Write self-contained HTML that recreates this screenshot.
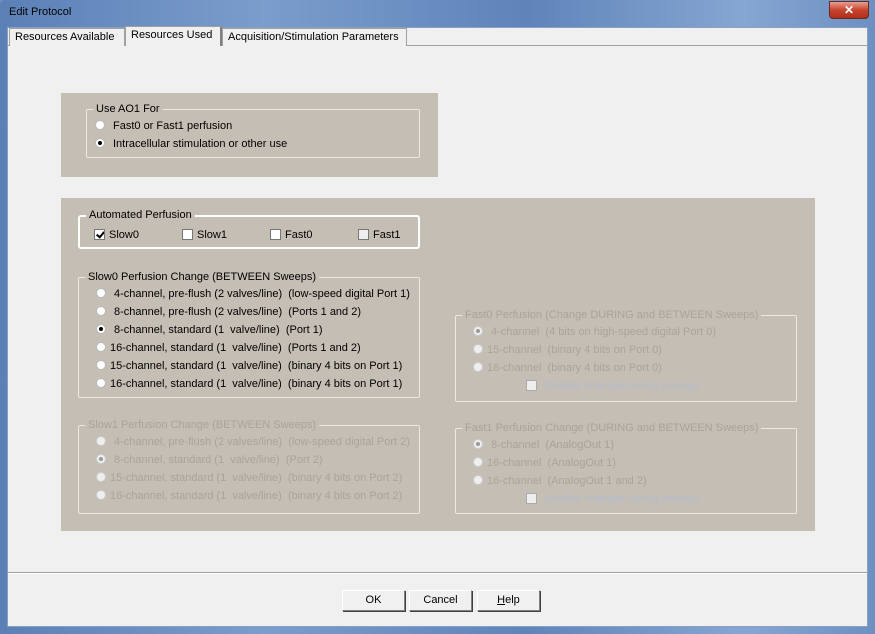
<!DOCTYPE html>
<html><head><style>
*{margin:0;padding:0;box-sizing:border-box}
body{width:875px;height:634px;overflow:hidden;background:#6d8fbf;font-family:"Liberation Sans",sans-serif;font-size:11px;color:#000;position:relative}
.a{position:absolute}
.frame{left:0;top:0;width:875px;height:634px;background:linear-gradient(90deg,#5b80b6,#7a9dcc 30%,#5f84ba 60%,#86a6d2 85%,#6d90c2);border-radius:6px 6px 0 0}
.client{left:7px;top:27px;width:861px;height:600px;background:#f0f0f0;border:1px solid #8aa0bf}
.title{left:9px;top:6px;font-size:11px;color:#000}
.close{left:829px;top:1px;width:40px;height:18px;background:linear-gradient(#e8a090,#c7432e 50%,#b0301c);border:1px solid #6a2a20;border-radius:0 0 4px 4px;color:#fff;font-weight:bold;text-align:center;line-height:16px;font-size:12px}
.tab{top:28px;height:18px;border:1px solid #a0a0a0;border-bottom:none;background:#f0f0f0;padding:2px 5px 0;white-space:nowrap}
.panel{left:8px;top:45px;width:859px;height:527px;border-top:1px solid #a0a0a0;background:#f0f0f0}
.bg{background:#c5beb4}
.g{position:absolute;border:1px solid #ece8e2;border-radius:2px}
.gl{position:absolute;top:-7px;left:6px;background:#c5beb4;padding:0 3px;white-space:nowrap}
.row{position:absolute;white-space:nowrap}
.r{display:inline-block;width:10px;height:10px;border-radius:50%;background:#fff;border:1px solid #b8b8b8;vertical-align:-1px;margin-right:8px;position:relative}
.r.on::after{content:"";position:absolute;left:2px;top:2px;width:4px;height:4px;border-radius:50%;background:#000}
.d{color:#a9a39b}
.d .r{background:#eee;border-color:#ccc}
.d .r.on::after{background:#999}
.c{display:inline-block;width:11px;height:11px;background:#fff;border:1px solid #777;vertical-align:-2px;margin-right:4px;position:relative;overflow:hidden}
.c.on::after{content:"";position:absolute;left:3px;top:0px;width:3px;height:6px;border:solid #000;border-width:0 2px 2px 0;transform:rotate(40deg)}
.btn{top:590px;width:63px;height:21px;background:#f0f0f0;border:1px solid #808080;border-top-color:#fff;border-left-color:#fff;box-shadow:1px 1px 0 #404040;text-align:center;line-height:19px}
</style></head><body>
<div class="a frame"></div>
<div class="a title">Edit Protocol</div>
<div class="a close">✕</div>
<div class="a client"></div>
<div class="a panel"></div>
<div class="a tab" style="left:9px;width:116px">Resources Available</div>
<div class="a tab" style="left:125px;width:97px;top:26px;height:20px;background:#f0f0f0;border-right:2px solid #808080">Resources Used</div>
<div class="a tab" style="left:222px;width:185px">Acquisition/Stimulation Parameters</div>
<div class="a" style="left:8px;top:572px;width:859px;border-top:1px solid #a0a0a0;border-bottom:1px solid #fff"></div>

<div class="a bg" style="left:61px;top:93px;width:377px;height:84px">
 <div class="g" style="left:25px;top:16px;width:334px;height:49px"><span class="gl">Use AO1 For</span>
  <div class="row" style="left:8px;top:10px"><span class="r"></span>Fast0 or Fast1 perfusion</div>
  <div class="row" style="left:8px;top:28px"><span class="r on"></span>Intracellular stimulation or other use</div>
 </div>
</div>

<div class="a bg" style="left:61px;top:198px;width:754px;height:333px">
 <div class="g" style="left:17px;top:17px;width:342px;height:34px;border-color:#fff;border-width:2px;border-radius:3px"><span class="gl" style="top:-8px">Automated Perfusion</span>
  <div class="row" style="left:14px;top:12px"><span class="c on"></span>Slow0</div>
  <div class="row" style="left:102px;top:12px"><span class="c"></span>Slow1</div>
  <div class="row" style="left:190px;top:12px"><span class="c"></span>Fast0</div>
  <div class="row" style="left:278px;top:12px"><span class="c" style="background:#eee"></span>Fast1</div>
 </div>
 <div class="g" style="left:17px;top:79px;width:342px;height:121px"><span class="gl">Slow0 Perfusion Change (BETWEEN Sweeps)</span>
  <div class="row" style="left:17px;top:10px"><span class="r"></span>4-channel, pre-flush (2 valves/line)&nbsp; (low-speed digital Port 1)</div>
  <div class="row" style="left:17px;top:28px"><span class="r"></span>8-channel, pre-flush (2 valves/line)&nbsp; (Ports 1 and 2)</div>
  <div class="row" style="left:17px;top:46px"><span class="r on"></span>8-channel, standard (1&nbsp; valve/line)&nbsp; (Port 1)</div>
  <div class="row" style="left:17px;top:64px"><span class="r" style="margin-right:4px"></span>16-channel, standard (1&nbsp; valve/line)&nbsp; (Ports 1 and 2)</div>
  <div class="row" style="left:17px;top:82px"><span class="r" style="margin-right:4px"></span>15-channel, standard (1&nbsp; valve/line)&nbsp; (binary 4 bits on Port 1)</div>
  <div class="row" style="left:17px;top:100px"><span class="r" style="margin-right:4px"></span>16-channel, standard (1&nbsp; valve/line)&nbsp; (binary 4 bits on Port 1)</div>
 </div>
 <div class="g d" style="left:17px;top:227px;width:342px;height:89px"><span class="gl">Slow1 Perfusion Change (BETWEEN Sweeps)</span>
  <div class="row" style="left:17px;top:10px"><span class="r"></span>4-channel, pre-flush (2 valves/line)&nbsp; (low-speed digital Port 2)</div>
  <div class="row" style="left:17px;top:28px"><span class="r on"></span>8-channel, standard (1&nbsp; valve/line)&nbsp; (Port 2)</div>
  <div class="row" style="left:17px;top:46px"><span class="r" style="margin-right:4px"></span>15-channel, standard (1&nbsp; valve/line)&nbsp; (binary 4 bits on Port 2)</div>
  <div class="row" style="left:17px;top:64px"><span class="r" style="margin-right:4px"></span>16-channel, standard (1&nbsp; valve/line)&nbsp; (binary 4 bits on Port 2)</div>
 </div>
 <div class="g d" style="left:394px;top:117px;width:342px;height:87px"><span class="gl">Fast0 Perfusion (Change DURING and BETWEEN Sweeps)</span>
  <div class="row" style="left:17px;top:10px"><span class="r on"></span>4-channel&nbsp; (4 bits on high-speed digital Port 0)</div>
  <div class="row" style="left:17px;top:28px"><span class="r" style="margin-right:4px"></span>15-channel&nbsp; (binary 4 bits on Port 0)</div>
  <div class="row" style="left:17px;top:46px"><span class="r" style="margin-right:4px"></span>16-channel&nbsp; (binary 4 bits on Port 0)</div>
  <div class="row" style="left:70px;top:64px;color:#b4bccb"><span class="c" style="background:#eee;border-color:#aaa"></span>&nbsp;Disable changes during sweeps</div>
 </div>
 <div class="g d" style="left:394px;top:230px;width:342px;height:86px"><span class="gl">Fast1 Perfusion Change (DURING and BETWEEN Sweeps)</span>
  <div class="row" style="left:17px;top:10px"><span class="r on"></span>8-channel&nbsp; (AnalogOut 1)</div>
  <div class="row" style="left:17px;top:28px"><span class="r" style="margin-right:4px"></span>16-channel&nbsp; (AnalogOut 1)</div>
  <div class="row" style="left:17px;top:46px"><span class="r" style="margin-right:4px"></span>16-channel&nbsp; (AnalogOut 1 and 2)</div>
  <div class="row" style="left:70px;top:64px;color:#b4bccb"><span class="c" style="background:#eee;border-color:#aaa"></span>&nbsp;Disable changes during sweeps</div>
 </div>
</div>

<div class="a btn" style="left:342px">OK</div>
<div class="a btn" style="left:409px">Cancel</div>
<div class="a btn" style="left:477px"><u>H</u>elp</div>
</body></html>
